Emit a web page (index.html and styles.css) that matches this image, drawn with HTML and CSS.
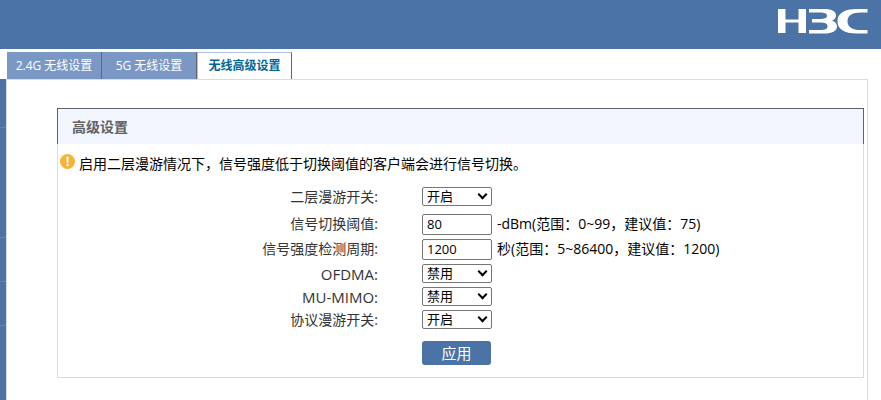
FILE: index.html
```html
<!DOCTYPE html>
<html lang="zh-CN">
<head>
<meta charset="utf-8">
<title>无线高级设置</title>
<link rel="stylesheet" href="styles.css">
</head>
<body>
<header class="banner">
  <svg class="logo" viewBox="0 0 90 25" role="img" aria-label="H3C">
    <path class="fill" d="M0 0H7.500V10.500H20.500V0H28V24H20.500V13.500H7.500V24H0Z"/>
    <path class="fill" d="M31 0H46C54 0 58 2.500 58 6.500C58 9 56.500 10.500 54 11.500C57 12.500 59 14.500 59 17.500C59 22 54 24.500 46 24.500H31V21H42C47 21 49.500 20 49.500 17.200C49.500 14.400 47 13.500 42 13.500H34V10H42C46.500 10 49 9 49 6.700C49 4.400 46.500 3.500 42 3.500H31Z"/>
    <path class="fill" d="M89.500 0H79C66 0 59.500 4.500 59.500 12.200C59.500 20 66 24.500 79 24.500H89.500V21H83C74 21 69.500 18 69.500 12.200C69.500 6.500 74 3.500 83 3.500H89.500Z"/>
  </svg>
</header>
<nav class="tabs">
  <a class="tab" href="#g24">2.4G 无线设置</a>
  <a class="tab" href="#g5">5G 无线设置</a>
  <a class="tab active" href="#advanced">无线高级设置</a>
</nav>
<div class="layout">
  <aside class="side">
    <div class="side-item first"></div>
    <div class="side-item open"></div>
    <div class="side-item"></div>
    <div class="side-item"></div>
  </aside>
  <main class="page">
    <section class="card">
      <h1 class="card-title">高级设置</h1>
      <p class="note">
        <svg class="note-icon" viewBox="0 0 16 16" aria-hidden="true">
          <circle class="disc" cx="8" cy="8" r="8"/>
          <path class="fill" d="M6.700 3H9.300L8.800 9.500H7.200Z"/>
          <circle class="fill" cx="8" cy="11.800" r="1.300"/>
        </svg>
        <span>启用二层漫游情况下，信号强度低于切换阈值的客户端会进行信号切换。</span>
      </p>
      <form class="form">
        <div class="row lead">
          <label for="roam">二层漫游开关:</label>
          <div><span class="picker"><select id="roam"><option>开启</option><option>禁用</option></select></span></div>
        </div>
        <div class="row tall">
          <label for="threshold">信号切换阈值:</label>
          <div><input id="threshold" type="text" value="80"><span class="hint">-dBm(范围：0~99，建议值：75)</span></div>
        </div>
        <div class="row tall">
          <label for="period">信号强度检测周期:</label>
          <div><input id="period" type="text" value="1200"><span class="hint">秒(范围：5~86400，建议值：1200)</span></div>
        </div>
        <div class="row">
          <label class="latin" for="ofdma">OFDMA:</label>
          <div><span class="picker"><select id="ofdma"><option>禁用</option><option>开启</option></select></span></div>
        </div>
        <div class="row">
          <label class="latin" for="mimo">MU-MIMO:</label>
          <div><span class="picker"><select id="mimo"><option>禁用</option><option>开启</option></select></span></div>
        </div>
        <div class="row">
          <label for="protocol">协议漫游开关:</label>
          <div><span class="picker"><select id="protocol"><option>开启</option><option>禁用</option></select></span></div>
        </div>
        <div class="row actions">
          <div><button class="apply" type="button">应用</button></div>
        </div>
      </form>
    </section>
  </main>
</div>
</body>
</html>
```
FILE: styles.css
```css
* {
  box-sizing: border-box;
}

body {
  margin: 0;
  min-height: 100vh;
  display: flex;
  flex-direction: column;
  background: #fff;
  color: #000;
  font: 14px/20px "Open Sans", "Noto Sans CJK SC", sans-serif;
}

.banner {
  display: flex;
  justify-content: flex-end;
  height: 49px;
  padding: 9px 13px 0 0;
  background: #4b73a6;
}

.logo {
  width: 90px;
  height: 25px;
}

.fill {
  fill: #fff;
}

.tabs {
  display: flex;
  margin: 3px 0 0 7px;
}

.tab {
  width: 95px;
  height: 27px;
  border-right: 1px solid #5f6673;
  background: #7b97c3;
  color: #fff;
  font-size: 12px;
  line-height: 27px;
  text-align: center;
  text-decoration: none;
  white-space: nowrap;
}

.tab.active {
  border-top: 1px solid #b0c0dc;
  border-left: 1px solid #b0c0dc;
  background: #fff;
  color: #006699;
  font-weight: bold;
  line-height: 26px;
}

.layout {
  display: flex;
  flex: 1;
}

.side {
  width: 6px;
  background: #4b73a6;
}

.side-item {
  height: 44px;
  border-bottom: 1px solid #6384b5;
}

.side-item.first {
  height: 49px;
}

.side-item.open {
  height: 110px;
}

.page {
  flex: 1;
  margin-right: 13px;
  padding: 28px 3px 22px 50px;
  border: 1px solid #d9dbe8;
  border-bottom: 0;
}

.card {
  border: 1px solid #d9dbe8;
  border-top: 0;
}

.card-title {
  height: 36px;
  margin: 0 -1px;
  padding-left: 14px;
  border: 1px solid #606266;
  border-bottom: 0;
  background: #f2f6ff;
  color: #606266;
  font-size: 14px;
  line-height: 36px;
}

.note {
  display: flex;
  align-items: center;
  gap: 4px;
  margin: 0;
  padding: 10px 0 0 2px;
}

.note-icon {
  flex: none;
  width: 15px;
  height: 15px;
  margin-bottom: 5px;
}

.disc {
  fill: #f8b334;
}

.form {
  padding: 13px 0 12px;
}

.row {
  display: grid;
  grid-template-columns: 40% 1fr;
  column-gap: 42px;
  height: 23px;
}

.row label {
  padding-right: 2px;
  color: #333;
  text-align: right;
}

.row .latin {
  font-size: 15px;
}

.row > div {
  display: flex;
  align-items: flex-start;
  grid-column: 2;
}

.lead {
  margin-bottom: 4px;
}

.tall {
  height: 25px;
}

.picker {
  display: flex;
  position: relative;
}

.picker::after {
  content: "";
  position: absolute;
  top: 4px;
  right: 6px;
  width: 5px;
  height: 5px;
  border: solid #000;
  border-width: 0 2px 2px 0;
  transform: rotate(45deg);
  pointer-events: none;
}

.row select,
.row input {
  width: 70px;
  margin: 0;
  padding: 0 4px;
  border: 1px solid #767676;
  border-radius: 2px;
  background: #fff;
  color: #000;
  font: 13px/17px "Open Sans", "Noto Sans CJK SC", sans-serif;
}

.row select {
  appearance: none;
  height: 19px;
}

.row input {
  height: 21px;
  padding-bottom: 1px;
}

.hint {
  margin-left: 5px;
}

.actions {
  height: auto;
  padding-top: 8px;
}

.apply {
  width: 69px;
  height: 24px;
  padding: 0;
  border: 0;
  border-radius: 3px;
  background: #4b73a6;
  color: #fff;
  font: 15px/24px "Open Sans", "Noto Sans CJK SC", sans-serif;
}
```
